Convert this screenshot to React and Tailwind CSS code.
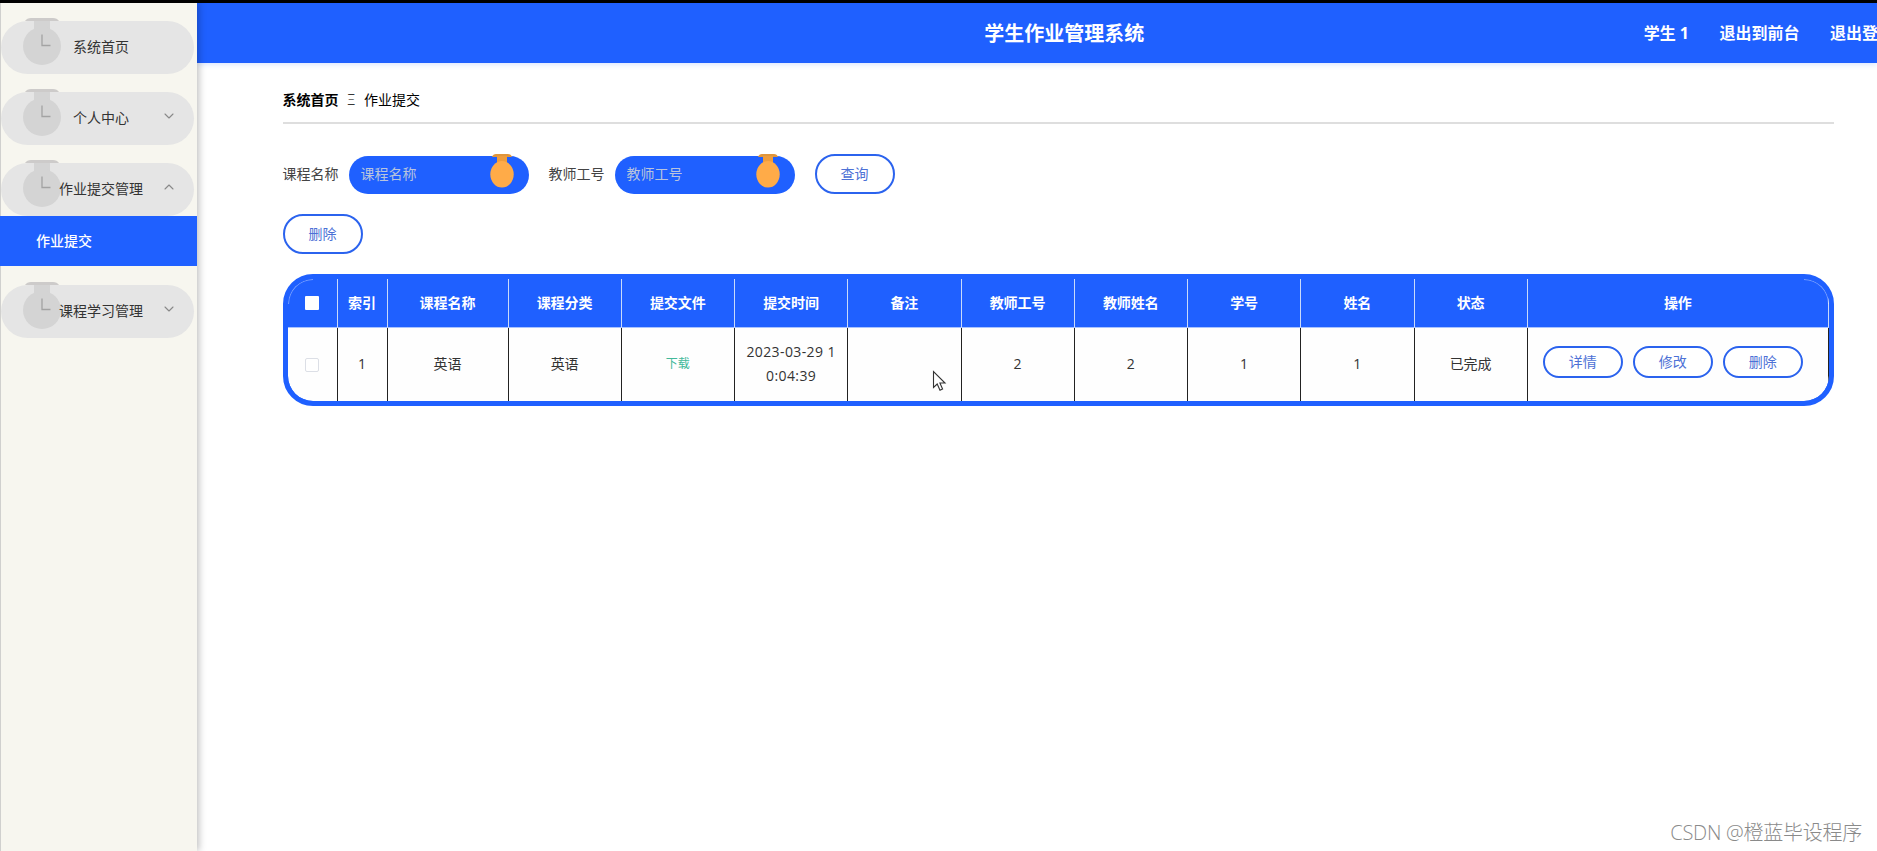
import React, { useState } from "react";
import { ChevronDown, ChevronUp } from "lucide-react";

const menus = [
  { name: "系统首页" },
  { name: "个人中心", children: ["修改密码", "个人信息"] },
  { name: "作业提交管理", children: ["作业提交"] },
  { name: "课程学习管理", children: ["课程学习"] },
];

const columns = [
  "索引", "课程名称", "课程分类", "提交文件", "提交时间", "备注",
  "教师工号", "教师姓名", "学号", "姓名", "状态",
];

const rows = [
  ["1", "英语", "英语", "下载", "2023-03-29 10:04:39", "", "2", "2", "1", "1", "已完成"],
];

const gridCols = "grid grid-cols-[50px_50px_121px_repeat(9,113.25px)_1fr]";

function MenuIcon() {
  return (
    <svg className="absolute left-[21px] -top-[3px]" width="40" height="48" viewBox="0 0 40 48">
      <path d="M3 3 Q5 0 9 0 H31 Q35 0 37 3 Z" fill="#cdcbca" />
      <path d="M12 3 H28 V13 H12 Z" fill="#d4d4d4" />
      <circle cx="20" cy="28" r="19" fill="#d4d4d4" />
      <path d="M20 16.5 V27.5 H28.5" fill="none" stroke="#a3a3a3" strokeWidth="1.3" />
    </svg>
  );
}

function MedalIcon() {
  return (
    <svg className="absolute right-[15px] -top-[2px]" width="24" height="34" viewBox="0 0 24 34">
      <path d="M2 3 Q3 0 6 0 H18 Q21 0 22 3 Z" fill="#e0963c" />
      <path d="M7 2 H17 V11 H7 Z" fill="#ee9c3d" />
      <ellipse cx="12" cy="20.3" rx="11.7" ry="13.2" fill="#ffab48" />
    </svg>
  );
}

function SearchField({ label }) {
  return (
    <div className="flex items-center gap-[10px]">
      <label className="-mt-px text-[#444]">{label}</label>
      <div className="relative mt-[1px]">
        <input
          placeholder={label}
          className="block h-[38px] w-[180px] rounded-full bg-[#1f60ff] px-3 pb-[2px] text-white outline-none placeholder:text-[#b9c4dc]"
        />
        <MedalIcon />
      </div>
    </div>
  );
}

function Button({ children, small }) {
  return (
    <button
      className={`w-20 rounded-full border-2 border-[#2b63ee] bg-white text-[#4d71d6] leading-none ${small ? "h-8" : "h-10"}`}
    >
      {children}
    </button>
  );
}

function Sidebar() {
  const [opened, setOpened] = useState("作业提交管理");

  return (
    <aside className="relative z-10 w-[196.5px] shrink-0 border-l border-[#d0d0ce] bg-[#f7f6ef] shadow-[2px_0_7px_rgba(0,0,0,0.25)]">
      {menus.map((menu) => {
        const isOpen = menu.children && opened === menu.name;
        return (
          <div key={menu.name} className="pt-[18px]">
            <div
              onClick={() => setOpened(isOpen ? "" : menu.name)}
              className="relative flex h-[53px] w-[193px] cursor-pointer items-center justify-center rounded-full bg-[#e5e5e5] pb-[2px] pl-[7px] text-[#333]"
            >
              <MenuIcon />
              <span className="relative">{menu.name}</span>
              {menu.children && (
                <span className="absolute right-[17px] top-[16px] text-[#888]">
                  {isOpen ? <ChevronUp size={16} strokeWidth={1.6} /> : <ChevronDown size={16} strokeWidth={1.6} />}
                </span>
              )}
            </div>
            {isOpen &&
              menu.children.map((child) => (
                <div key={child} className="mb-px -ml-px flex h-[50px] items-center bg-[#1f60ff] pl-9 font-medium text-white">
                  {child}
                </div>
              ))}
          </div>
        );
      })}
    </aside>
  );
}

function DataTable() {
  return (
    <div className="relative mt-5 overflow-hidden rounded-[30px] border-[5px] border-[#1f60ff] bg-[#1f60ff]">
      <span className="absolute left-0 top-0 size-[25px] rounded-tl-[25px] border-l border-t border-white/40" />
      <span className="absolute right-0 top-0 size-[25px] rounded-tr-[25px] border-r border-t border-white/40" />
      <div className={`${gridCols} h-[49px] border-b border-[#a9c3ff] text-white font-bold`}>
        <div className="flex items-center justify-center border-r border-[#c9dafa]">
          <span className="size-[14px] rounded-[1px] bg-white" />
        </div>
        {columns.map((col) => (
          <div key={col} className="flex items-center justify-center border-r border-[#c9dafa]">
            {col}
          </div>
        ))}
        <div className="flex items-center justify-center border-r border-[#c9dafa]">操作</div>
      </div>
      {rows.map((row) => (
        <div key={row[0]} className={`${gridCols} h-[73px] overflow-hidden rounded-b-[25px] bg-[#fefefe] text-[#333]`}>
          <div className="flex items-center justify-center border-r border-[#222]">
            <span className="size-[14px] rounded-[2px] border border-[#dcdfe6] bg-white" />
          </div>
          {row.map((cell, i) => (
            <div
              key={columns[i]}
              className="flex items-center justify-center border-r border-[#222] px-[10px] pb-[2px] text-center leading-6 break-all"
            >
              {i === 3 ? (
                <button className="text-[12px] text-[#42b99a]">{cell}</button>
              ) : (
                <span className={i === 4 ? "tracking-[0.4px]" : ""}>{cell}</span>
              )}
            </div>
          ))}
          <div className="flex items-start gap-[10px] border-r border-[#222] pl-[15px] pt-[18px]">
            <Button small>详情</Button>
            <Button small>修改</Button>
            <Button small>删除</Button>
          </div>
        </div>
      ))}
    </div>
  );
}

function App() {
  return (
    <div className="relative flex h-screen flex-col overflow-hidden border-t-[3px] border-black bg-white text-sm font-['Open_Sans','Noto_Sans_CJK_SC',sans-serif]">
      <div className="flex min-h-0 flex-1">
        <Sidebar />
        <div className="min-w-0 flex-1">
          <header className="grid h-[60px] grid-cols-[1fr_auto_1fr] items-center bg-[#1f60ff] font-bold text-white shadow-[0_1px_6px_rgba(31,96,255,0.2)]">
            <h1 className="col-start-2 ml-[55px] pt-[2px] text-xl font-bold">学生作业管理系统</h1>
            <nav className="-mr-[17px] flex justify-end gap-[30.5px] whitespace-nowrap text-base">
              <span>学生 1</span>
              <span>退出到前台</span>
              <span>退出登录</span>
            </nav>
          </header>

          <main className="ml-[86px] mr-[43px]">
            <div className="flex h-[61px] items-center gap-[9px] border-b-2 border-[#dedede] pt-[14px] text-black">
              <b>系统首页</b>
              <span className="font-light">Ξ</span>
              <span>作业提交</span>
            </div>

            <div className="mt-[30px] flex h-10 items-center gap-5">
              <SearchField label="课程名称" />
              <SearchField label="教师工号" />
              <Button>查询</Button>
            </div>
            <div className="mt-5 flex">
              <Button>删除</Button>
            </div>

            <DataTable />
          </main>
        </div>
      </div>

      <svg className="absolute left-[932px] top-[367px]" width="15" height="22" viewBox="0 0 15 22">
        <path
          d="M1.5 1.5 V17.5 L5.2 14 L8 20.3 L10.6 19.1 L7.9 13 H13 Z"
          fill="#fff"
          stroke="#333"
          strokeWidth="1.1"
        />
      </svg>
      <div className="absolute bottom-[4px] right-[15px] z-20 text-xl font-light tracking-[-0.25px] text-[#8a8a8a]">
        CSDN @橙蓝毕设程序
      </div>
    </div>
  );
}

export default App;
